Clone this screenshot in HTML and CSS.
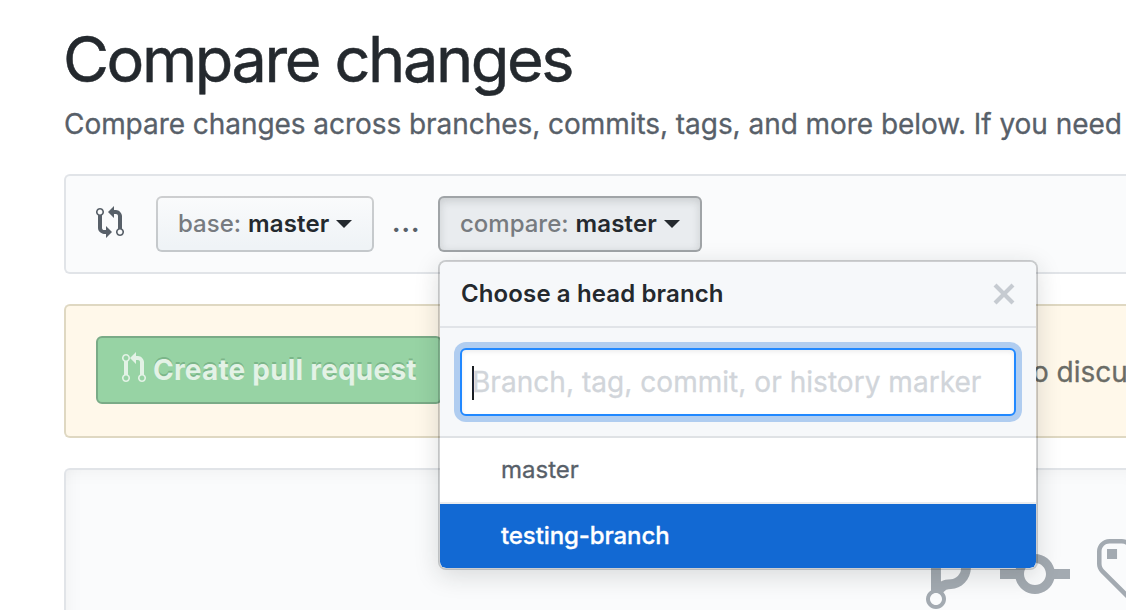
FILE: index.html
```html
<!DOCTYPE html>
<html lang="en">
<head>
<meta charset="utf-8">
<title>Compare changes</title>
<link rel="stylesheet" href="styles.css">
</head>
<body>
<main class="page">
  <h1 class="title">Compare changes</h1>
  <p class="subtitle">Compare changes across branches, commits, tags, and more below. If you need</p>

  <section class="range-editor">
    <svg class="icon-compare" viewBox="0 0 14 16" width="28" height="32"><path d="M5 12H4c-.27-.02-.48-.11-.69-.31-.21-.2-.3-.42-.31-.69V4.72A1.993 1.993 0 0 0 2 1a1.993 1.993 0 0 0-1 3.72V11c.03.78.34 1.47.94 2.06.6.59 1.28.91 2.06.94h1v2l3-3-3-3v2zM2 1.8c.66 0 1.2.55 1.2 1.2 0 .65-.55 1.2-1.2 1.2C1.35 4.2.8 3.65.8 3c0-.65.55-1.2 1.2-1.2zm11 9.48V5c-.03-.78-.34-1.47-.94-2.06-.6-.59-1.28-.91-2.06-.94H9V0L6 3l3 3V4h1c.27.02.48.11.69.31.21.2.3.42.31.69v6.28A1.993 1.993 0 0 0 12 15a1.993 1.993 0 0 0 1-3.72zm-1 2.92c-.66 0-1.2-.55-1.2-1.2 0-.65.55-1.2 1.2-1.2.65 0 1.2.55 1.2 1.2 0 .65-.55 1.2-1.2 1.2z"/></svg>
    <button class="select-button base"><span class="label">base:</span><span class="value">master</span><span class="caret"></span></button>
    <span class="dots">...</span>
    <div class="select-wrap">
      <button class="select-button compare selected"><span class="label">compare:</span><span class="value">master</span><span class="caret"></span></button>
      <div class="menu">
        <div class="menu-header">
          <span class="menu-title">Choose a head branch</span>
          <svg class="icon-close" viewBox="0 0 12 16" width="24" height="32"><path d="M7.48 8l3.75 3.75-1.48 1.48L6 9.48l-3.75 3.75-1.48-1.48L4.52 8 .77 4.25l1.48-1.48L6 6.52l3.75-3.75 1.48 1.48z"/></svg>
        </div>
        <div class="menu-filter">
          <div class="field"><span class="cursor"></span><span class="placeholder">Branch, tag, commit, or history marker</span></div>
        </div>
        <div class="menu-item">master</div>
        <div class="menu-item active">testing-branch</div>
      </div>
    </div>
  </section>

  <section class="flash">
    <button class="create-button">
      <svg class="icon-pull" viewBox="0 0 12 16" width="24" height="32"><path d="M11 11.28V5c-.03-.78-.34-1.47-.94-2.06C9.46 2.35 8.78 2.03 8 2H7V0L4 3l3 3V4h1c.27.02.48.11.69.31.21.2.3.42.31.69v6.28A1.993 1.993 0 0 0 10 15a1.993 1.993 0 0 0 1-3.72zm-1 2.92c-.66 0-1.2-.55-1.2-1.2 0-.65.55-1.2 1.2-1.2.65 0 1.2.55 1.2 1.2 0 .65-.55 1.2-1.2 1.2zM4 3c0-1.11-.89-2-2-2a1.993 1.993 0 0 0-1 3.72v6.56A1.993 1.993 0 0 0 2 15a1.993 1.993 0 0 0 1-3.72V4.72c.59-.34 1-.98 1-1.72zm-.8 10c0 .66-.55 1.2-1.2 1.2-.65 0-1.2-.55-1.2-1.2 0-.65.55-1.2 1.2-1.2.65 0 1.2.55 1.2 1.2zM2 4.2C1.34 4.2.8 3.65.8 3c0-.65.55-1.2 1.2-1.2.65 0 1.2.55 1.2 1.2 0 .65-.55 1.2-1.2 1.2z"/></svg>
      <span>Create pull request</span>
    </button>
    <span class="flash-text">to discuss</span>
  </section>

  <section class="blankslate">
    <svg class="icon-branch" viewBox="0 0 10 16" width="50" height="80"><path d="M10 5c0-1.11-.89-2-2-2a1.993 1.993 0 0 0-1 3.72v.3c-.02.52-.23.98-.63 1.38-.4.4-.86.61-1.38.63-.83.02-1.48.16-2 .45V4.72a1.993 1.993 0 0 0-1-3.72C.88 1 0 1.89 0 3a2 2 0 0 0 1 1.72v6.56c-.59.35-1 .99-1 1.72 0 1.11.89 2 2 2 1.11 0 2-.89 2-2 0-.53-.2-1-.53-1.36.09-.06.48-.41.59-.47.25-.11.56-.17.94-.17 1.05-.05 1.95-.45 2.75-1.25S8.95 7.77 9 6.73h-.02C9.59 6.37 10 5.73 10 5zM2 1.8c.66 0 1.2.55 1.2 1.2 0 .65-.55 1.2-1.2 1.2C1.35 4.2.8 3.65.8 3c0-.65.55-1.2 1.2-1.2zm0 12.41c-.66 0-1.2-.55-1.2-1.2 0-.65.55-1.2 1.2-1.2.65 0 1.2.55 1.2 1.2 0 .65-.55 1.2-1.2 1.2zm6-8c-.66 0-1.2-.55-1.2-1.2 0-.65.55-1.2 1.2-1.2.65 0 1.2.55 1.2 1.2 0 .65-.55 1.2-1.2 1.2z"/></svg>
    <svg class="icon-commit" viewBox="0 0 14 16" width="70" height="80"><path d="M10.86 7c-.45-1.72-2-3-3.86-3-1.86 0-3.41 1.28-3.86 3H0v2h3.14c.45 1.72 2 3 3.86 3 1.86 0 3.41-1.28 3.86-3H14V7h-3.14zM7 10.2c-1.22 0-2.2-.98-2.2-2.2 0-1.22.98-2.2 2.2-2.2 1.22 0 2.2.98 2.2 2.2 0 1.22-.98 2.2-2.2 2.2z"/></svg>
    <svg class="icon-tag" viewBox="0 0 14 16" width="70" height="80"><path d="M7.73 1.73C7.26 1.26 6.62 1 5.96 1H3.5C2.13 1 1 2.13 1 3.5v2.47c0 .66.27 1.3.73 1.77l6.06 6.06c.39.39 1.02.39 1.41 0l4.59-4.59a.996.996 0 0 0 0-1.41L7.73 1.73zM2.38 7.09c-.31-.3-.47-.7-.47-1.13V3.5c0-.88.72-1.59 1.59-1.59h2.47c.42 0 .83.16 1.13.47l6.14 6.13-4.73 4.73-6.13-6.15zM3.01 3h2v2H3V3h.01z"/></svg>
  </section>
</main>
</body>
</html>
```
FILE: styles.css
```css
* { box-sizing: border-box; }

html, body {
  margin: 0;
  height: 610px;
  overflow: hidden;
  background: #fff;
  color: #24292e;
  font-family: Inter, "Liberation Sans", sans-serif;
}

button { font-family: inherit; margin: 0; padding: 0; }
svg { display: block; flex: none; fill: currentColor; }

.page {
  width: 100%;
  height: 610px;
  padding: 12px 0 0 64px;
  overflow: hidden;
}

.title {
  margin: 0 0 0 -1px;
  height: 90px;
  font-size: 63px;
  line-height: 94px;
  font-weight: 400;
  letter-spacing: -2.4px;
  -webkit-text-stroke: 0.5px;
  white-space: nowrap;
}

.subtitle {
  margin: 0;
  height: 72px;
  font-size: 28px;
  line-height: 44px;
  color: #586069;
  letter-spacing: -0.05px;
  -webkit-text-stroke: 0.3px;
  white-space: nowrap;
}

.range-editor {
  display: flex;
  align-items: flex-start;
  height: 100px;
  padding: 20px 30px;
  border: 2px solid #e1e4e8;
  border-right: 0;
  border-radius: 6px 0 0 6px;
  background: #fafbfc;
}

.icon-compare { margin: 10px 32px 0 0; color: #586069; }

.select-button {
  display: flex;
  flex: none;
  align-items: center;
  height: 56px;
  padding: 0 20px;
  border: 2px solid rgba(27, 31, 35, 0.2);
  border-radius: 6px;
  background: linear-gradient(-180deg, #fafbfc 0%, #eff3f6 90%) border-box;
  color: #24292e;
  font-size: 24px;
  line-height: 40px;
  white-space: nowrap;
}

.base { width: 218px; }
.compare { width: 264px; }

.selected {
  border-color: rgba(27, 31, 35, 0.35);
  background: #e9ecef;
  box-shadow: inset 0 3px 8px rgba(27, 31, 35, 0.15);
}

.label { color: #777b80; font-weight: 500; margin-right: 7px; }
.value { font-weight: 600; letter-spacing: 0.15px; }

.caret {
  margin: 0 0 0 7px;
  border: 8px solid transparent;
  border-top-color: #24292e;
  border-bottom: 0;
}

.dots {
  width: 64px;
  height: 56px;
  color: #586069;
  font-size: 28px;
  font-weight: 600;
  letter-spacing: 0.6px;
  line-height: 53px;
  text-align: center;
}

.select-wrap { position: relative; }

.menu {
  position: absolute;
  z-index: 2;
  top: 64px;
  left: 0;
  width: 600px;
  height: 310px;
  overflow: hidden;
  border: 2px solid rgba(27, 31, 35, 0.2);
  border-radius: 8px;
  background: #fff padding-box;
  box-shadow: 0 6px 24px rgba(27, 31, 35, 0.15);
}

.menu-header {
  display: flex;
  align-items: center;
  justify-content: space-between;
  height: 66px;
  padding: 0 20px 0 21px;
  border-bottom: 2px solid #e1e4e8;
  background: #f6f8fa;
}

.menu-title { padding-bottom: 2px; font-size: 24px; font-weight: 600; letter-spacing: 0.12px; }
.icon-close { color: #c6cbd1; }

.menu-filter {
  height: 110px;
  padding: 20px;
  border-bottom: 2px solid #dfe2e5;
  background: #f6f8fa;
}

.field {
  display: flex;
  align-items: center;
  height: 68px;
  padding: 0 10px;
  border: 2px solid #2188ff;
  border-radius: 6px;
  background: #fff;
  box-shadow: inset 0 2px 4px rgba(27, 31, 35, 0.075), 0 0 0 6px #b0cdf0;
}

.cursor { width: 2px; height: 34px; margin: 2px -2px 0 0; background: #1b1f23; }

.placeholder {
  font-size: 28px;
  letter-spacing: 0.04px;
  color: #d1d5da;
  -webkit-text-stroke: 0.3px;
  white-space: nowrap;
}

.menu-item {
  height: 66px;
  padding-left: 61px;
  border-bottom: 2px solid #eaecef;
  font-size: 24px;
  line-height: 64px;
  color: #586069;
  -webkit-text-stroke: 0.3px;
}

.active {
  height: 64px;
  border: 0;
  border-radius: 0 0 6px 6px;
  background: #1269d3;
  color: #fff;
  font-weight: 500;
  letter-spacing: -0.1px;
}

.flash {
  display: flex;
  align-items: flex-start;
  height: 134px;
  margin-top: 30px;
  padding: 30px 0 0 30px;
  border: 2px solid #dfd8c2;
  border-right: 0;
  border-radius: 6px 0 0 6px;
  background: #fff8ea;
}

.create-button {
  display: flex;
  flex: none;
  align-items: center;
  width: 346px;
  height: 68px;
  padding-left: 24px;
  border: 2px solid #7aab87;
  border-radius: 6px;
  background: #97d3a4;
  color: #e3f2e6;
  font-size: 28px;
  font-weight: 700;
  letter-spacing: 0.2px;
  white-space: nowrap;
  text-shadow: 0 -2px 0 rgba(27, 80, 45, 0.22);
}

.icon-pull { margin: -4px 7px 0 0; }

.flash-text {
  margin-left: 581px;
  color: #6b6c66;
  font-size: 28px;
  line-height: 72px;
  -webkit-text-stroke: 0.3px;
  white-space: nowrap;
}

.blankslate {
  display: flex;
  height: 300px;
  margin-top: 30px;
  padding: 64px 0 0 860px;
  border: 2px solid #e1e4e8;
  border-right: 0;
  border-radius: 6px 0 0 6px;
  background: #fafbfc;
  box-shadow: inset 20px 0 20px -20px rgba(27, 31, 35, 0.05), inset 0 20px 20px -20px rgba(27, 31, 35, 0.05);
  color: #a3aab1;
}

.icon-commit { margin: 0 22px 0 24px; }
```
